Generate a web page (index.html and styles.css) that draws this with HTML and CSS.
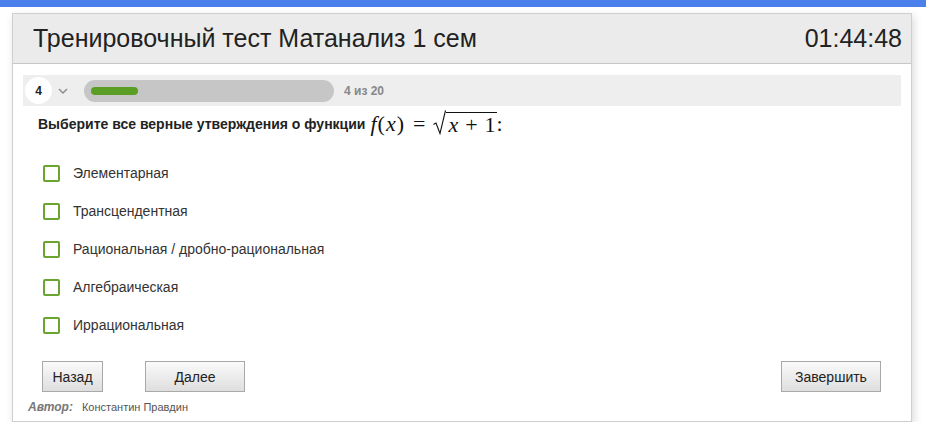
FILE: index.html
```html
<!DOCTYPE html>
<html lang="ru">
<head>
<meta charset="utf-8">
<link rel="stylesheet" href="styles.css">
</head>
<body>
<div class="topbar"></div>
<div class="panel">
  <div class="header">
    <div class="title">Тренировочный тест Матанализ 1 сем</div>
    <div class="timer">01:44:48</div>
  </div>
  <div class="content">
    <div class="progress-row">
      <div class="num">4</div>
      <svg class="chev" width="10" height="6" viewBox="0 0 10 6"><path d="M1 1 L5 5 L9 1" fill="none" stroke="#888" stroke-width="1.4"/></svg>
      <div class="bar"><div class="fill"></div></div>
      <div class="count">4 из 20</div>
    </div>
    <div class="question">
      <span class="qtext">Выберите все верные утверждения о функции</span>
      <span class="math"><i>f</i><span class="paren">(</span><i>x</i><span class="paren">)</span><span class="eq">=</span><span class="sqrt"><svg class="rad" width="13" height="25" viewBox="0 0 13 25"><path d="M0.5 14.5 L3 13 L7 23.5 L12.5 0.5" fill="none" stroke="#111" stroke-width="1.1"/></svg><span class="under"><i>x</i><span class="plus">+</span>1</span></span>:</span>
    </div>
    <ul class="options">
      <li><span class="box"></span>Элементарная</li>
      <li><span class="box"></span>Трансцендентная</li>
      <li><span class="box"></span>Рациональная / дробно-рациональная</li>
      <li><span class="box"></span>Алгебраическая</li>
      <li><span class="box"></span>Иррациональная</li>
    </ul>
    <div class="buttons">
      <button class="btn back">Назад</button>
      <button class="btn next">Далее</button>
      <button class="btn finish">Завершить</button>
    </div>
    <div class="author"><b>Автор:</b><span>Константин Правдин</span></div>
  </div>
</div>
</body>
</html>
```
FILE: styles.css
```css
* { box-sizing: border-box; }
html, body { margin: 0; padding: 0; background: #fff; }
body { font-family: "Liberation Sans", Arial, sans-serif; color: #333; }
.topbar { height: 7px; background: #4b7fec; }
.panel {
  margin: 6px 0 0 12px;
  width: 900px;
  border: 1px solid #cfcfcf;
  box-shadow: 2px 3px 8px rgba(0,0,0,0.15);
  background: #fff;
}
.header {
  height: 50px;
  background: #ebebeb;
  border-bottom: 1px solid #c8c8c8;
  display: flex;
  align-items: center;
  justify-content: space-between;
  padding: 0 9px 0 20px;
  font-size: 25px;
  color: #222;
}
.content { padding: 11px 10px 7px 10px; }
.progress-row {
  height: 31px;
  background: #eeeeee;
  display: flex;
  align-items: center;
  padding-left: 2px;
}
.num {
  width: 27px; height: 27px; border-radius: 50%;
  background: #fff;
  display: flex; align-items: center; justify-content: center;
  font-size: 12px; font-weight: bold; color: #222;
}
.chev { margin-left: 6px; }
.bar {
  margin-left: 16px;
  width: 250px; height: 22px; border-radius: 11px;
  background: #c6c6c6;
  display: flex; align-items: center;
  padding-left: 7px;
}
.fill { width: 47px; height: 8px; border-radius: 4px; background: #5b9e26; }
.count { margin-left: 10px; font-size: 12px; font-weight: bold; color: #888; }
.question {
  display: flex; align-items: center;
  padding-left: 15px;
  height: 36px;
  margin-bottom: 12px;
}
.qtext { font-size: 14px; font-weight: bold; color: #222; }
.math {
  font-family: "Liberation Serif", "Times New Roman", serif;
  font-size: 22px; color: #111; margin-left: 5px;
  display: inline-flex; align-items: flex-end; line-height: 24px;
  position: relative; top: -1px;
}
.math i { font-style: italic; }
.paren { margin: 0 1px; }
.eq { margin: 0 8px; }
.plus { margin: 0 7px; }
.sqrt { display: inline-flex; align-items: flex-end; }
.rad { display: block; margin-bottom: 1px; }
.under { border-top: 1.2px solid #111; padding: 0 1px 0 2px; line-height: 23px; }
.options { list-style: none; margin: 0; padding: 0 0 0 20px; }
.options li {
  display: flex; align-items: center;
  height: 38px;
  font-size: 14px; color: #333;
}
.box {
  width: 17px; height: 17px;
  border: 2px solid #6aa531; border-radius: 2px;
  margin-right: 13px;
}
.buttons { display: flex; padding: 17px 20px 0 19px; }
.btn {
  height: 31px;
  border: 1px solid #a9a9a9;
  background: linear-gradient(#fafafa, #dedede);
  font-family: "Liberation Sans", Arial, sans-serif;
  font-size: 14px; color: #222;
  padding: 0;
}
.back { width: 61px; }
.next { width: 100px; margin-left: 42px; }
.finish { width: 100px; margin-left: auto; }
.author { padding: 8px 0 0 5px; font-size: 11px; color: #555; display: flex; align-items: baseline; }
.author b { font-style: italic; font-size: 12px; color: #777; margin-right: 9px; }
```
